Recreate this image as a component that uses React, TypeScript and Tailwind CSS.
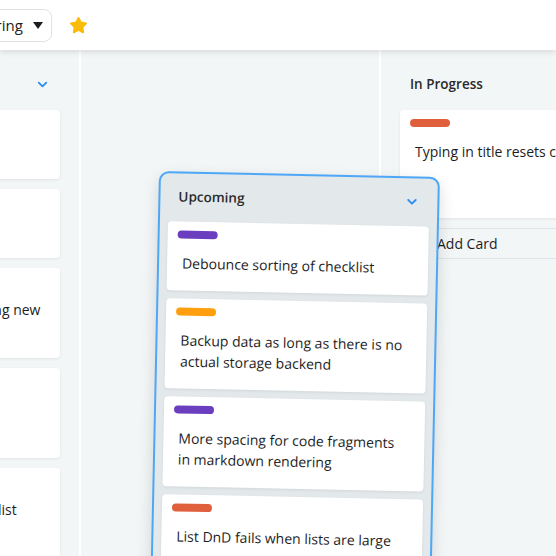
import { ChevronDown, Plus, Star } from "lucide-react";

type Card = { label?: string; text: string; minH?: string };

const labelColor: Record<string, string> = {
  purple: "bg-[#6b3dbf]",
  orange: "bg-[#ff9f10]",
  red: "bg-[#e0603d]",
};

const leftCards: Card[] = [
  { label: "purple", text: "Remember collapsed lists" },
  { label: "orange", text: "Keyboard shortcuts help" },
  { label: "red", text: "Focus card title when creating new card" },
  { label: "purple", text: "Send due date reminders as notifications" },
  { label: "orange", text: "Add a button to add a checklist item" },
];

const upcoming: Card[] = [
  { label: "purple", text: "Debounce sorting of checklist" },
  { label: "orange", text: "Backup data as long as there is no actual storage backend" },
  { label: "purple", text: "More spacing for code fragments in markdown rendering" },
  { label: "red", text: "List DnD fails when lists are large" },
];

function CardView({ card }: { card: Card }) {
  return (
    <div
      className={`bg-white rounded-[4px] shadow-[0_1px_3px_rgba(0,0,0,0.08)] px-2.5 pt-[9px] pb-[17px] ${card.minH ?? ""}`}
    >
      {card.label && <div className={`h-2 w-10 rounded-full ${labelColor[card.label]}`} />}
      <p className="mt-[14px] px-[5px] text-[14px] leading-[21px] text-[#1d1d1d]">{card.text}</p>
    </div>
  );
}

function ColumnHeader({ title, chevron }: { title?: string; chevron?: boolean }) {
  return (
    <div className="h-[60px] pt-2 flex items-center justify-between pl-2.5 pr-2.5">
      <span className="text-[13.5px] font-semibold text-[#2a2a2a]">{title}</span>
      {chevron && <ChevronDown size={15} strokeWidth={3} className="text-[#2d8ff0]" />}
    </div>
  );
}

export default function App() {
  return (
    <div className="w-[556px] h-[556px] overflow-hidden bg-white relative font-['Open_Sans',sans-serif]">
      {/* Top bar */}
      <header className="h-[50px] bg-white relative z-10 shadow-[0_2px_6px_rgba(0,0,0,0.12)] flex items-center gap-[17px]">
        <div className="-ml-[90px] h-[33px] w-[142px] border border-[#e2e2e2] rounded-lg flex items-center justify-between pl-[29px] pr-2">
          <span className="text-[15px] text-[#1d1d1d]">Engineering</span>
          <svg width="10" height="7" viewBox="0 0 10 7">
            <path d="M0 0h10L5 7z" fill="#1d1d1d" />
          </svg>
        </div>
        <Star size={19} className="text-[#fbbb0b]" fill="#fbbb0b" strokeWidth={1.5} />
      </header>

      {/* Board */}
      <div className="flex gap-[2px] -ml-[219px] h-[506px]">
        <section className="w-[298px] shrink-0 bg-[#f3f6f7] px-[19px]">
          <ColumnHeader chevron />
          <div className="flex flex-col gap-2.5">
            {leftCards.map((c, i) => (
              <CardView key={i} card={c} />
            ))}
          </div>
        </section>

        <section className="w-[298px] shrink-0 bg-[#f3f6f7]" />

        <section className="w-[298px] shrink-0 bg-[#f3f6f7] px-[19px]">
          <ColumnHeader title="In Progress" />
          <CardView card={{ label: "red", text: "Typing in title resets cursor", minH: "min-h-[108px]" }} />
          <div className="mt-2.5 h-[31px] border-y border-[#e0e4e6] flex items-center gap-2 pl-[15px] text-[14px] text-[#1d1d1d]">
            <Plus size={14} strokeWidth={2.5} />
            <span>Add Card</span>
          </div>
        </section>
      </div>

      {/* List being dragged */}
      <div className="absolute left-[159px] top-[171px] w-[281px] h-[420px] origin-top-left rotate-[1.2deg] border-2 border-[#4ea7f6] rounded-[10px] bg-[#e3e8eb] shadow-[0_6px_16px_rgba(0,0,0,0.14)] px-2 z-20">
        <div className="h-[48px] pb-0.5 flex items-center justify-between pl-2.5 pr-2.5">
          <span className="text-[13.5px] font-semibold text-[#2a2a2a]">Upcoming</span>
          <ChevronDown size={15} strokeWidth={3} className="text-[#2d8ff0]" />
        </div>
        <div className="flex flex-col gap-2">
          {upcoming.map((c, i) => (
            <CardView key={i} card={c} />
          ))}
        </div>
      </div>
    </div>
  );
}
